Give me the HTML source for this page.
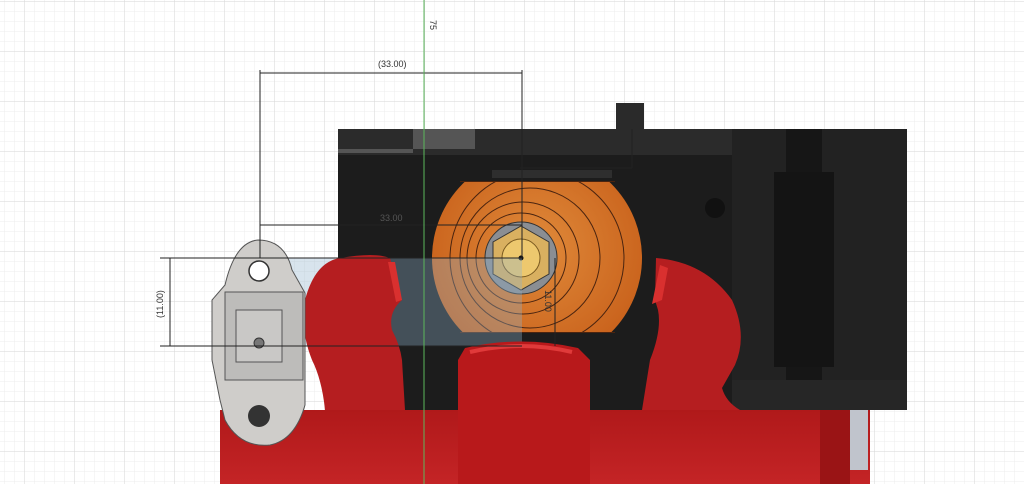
<!DOCTYPE html>
<html><head><meta charset="utf-8"><style>
html,body{margin:0;padding:0;background:#fff;}
svg{display:block}
text{font-family:"Liberation Sans",sans-serif;}
</style></head><body>
<svg width="1024" height="484" viewBox="0 0 1024 484" xmlns="http://www.w3.org/2000/svg">
<defs>
<pattern id="g1" width="10" height="10" patternUnits="userSpaceOnUse" x="5" y="2">
<path d="M10 0V10M0 10H10" fill="none" stroke="#ececec" stroke-width="1"/>
</pattern>
<pattern id="g2" width="50" height="50" patternUnits="userSpaceOnUse" x="25" y="2">
<path d="M50 0V50M0 50H50" fill="none" stroke="#d6d6d6" stroke-width="1"/>
</pattern>
<linearGradient id="red" x1="0" y1="0" x2="0" y2="1">
<stop offset="0" stop-color="#b0191a"/><stop offset="1" stop-color="#c42426"/></linearGradient>
<radialGradient id="org" cx="0.5" cy="0.45" r="0.55">
<stop offset="0" stop-color="#e08a3a"/><stop offset="1" stop-color="#c9621c"/></radialGradient>
</defs>
<rect width="1024" height="484" fill="#fff"/>
<rect width="1024" height="484" fill="url(#g1)"/>
<rect width="1024" height="484" fill="url(#g2)"/>

<!-- black body -->
<rect x="338" y="129" width="569" height="281" fill="#1c1c1c"/>
<rect x="338" y="129" width="569" height="26" fill="#2b2b2b"/>
<rect x="338" y="149" width="75" height="4" fill="#555"/>
<rect x="732" y="150" width="175" height="4" fill="#4a4a4a"/>
<rect x="413" y="129" width="62" height="20" fill="#555"/>
<rect x="616" y="103" width="28" height="27" fill="#2a2a2a"/>
<rect x="732" y="129" width="175" height="281" fill="#222"/>
<rect x="786" y="129" width="36" height="281" fill="#161616"/>
<rect x="774" y="172" width="60" height="195" fill="#141414"/>
<rect x="732" y="380" width="175" height="30" fill="#262626"/>
<circle cx="715" cy="208" r="10" fill="#111"/>
<rect x="492" y="170" width="120" height="8" fill="#2e2e2e"/>

<!-- orange disc -->
<clipPath id="dc"><rect x="420" y="181" width="230" height="152"/></clipPath>
<circle cx="537" cy="258" r="105" fill="url(#org)" clip-path="url(#dc)"/>
<g fill="none" stroke="#4a2410" stroke-width="1" clip-path="url(#dc)">
<circle cx="537" cy="258" r="87"/>
<circle cx="530" cy="258" r="70"/>
<circle cx="523" cy="258" r="56"/>
<circle cx="521" cy="258" r="45"/>
<line x1="460" y1="181.5" x2="615" y2="181.5"/>
<line x1="460" y1="332.5" x2="615" y2="332.5"/>
</g>
<circle cx="521" cy="258" r="36" fill="#8a8e93" stroke="#333"/>
<polygon points="521,226 549,242 549,274 521,290 493,274 493,242" fill="#d9b060" stroke="#333"/>
<circle cx="521" cy="258" r="19" fill="#edc86e" stroke="#7a5a20"/>
<circle cx="521" cy="258" r="2.5" fill="#111"/>

<!-- transparent blue box -->
<rect x="260" y="258" width="262" height="88" fill="#8fb3cc" opacity="0.35"/>

<!-- bottom red band -->
<rect x="220" y="410" width="650" height="74" fill="url(#red)"/>
<rect x="820" y="410" width="30" height="74" fill="#9a1415"/>
<rect x="850" y="410" width="18" height="60" fill="#c0c4cc"/>
<!-- left red bulb -->
<path d="M340 258 Q375 252 390 258 L402 300 Q388 312 392 330 Q400 345 402 360 L405 410 L325 410 Q322 380 312 360 Q300 330 305 300 Q315 262 340 258Z" fill="#b51e20"/>
<!-- middle red -->
<path d="M465 348 Q521 335 578 348 L590 360 L590 484 L458 484 L458 360Z" fill="#b8191b"/>
<path d="M470 352 Q521 340 572 352" fill="none" stroke="#e03a3a" stroke-width="4"/>
<!-- right red -->
<path d="M656 258 Q705 262 732 300 Q748 335 735 365 L722 388 Q726 402 740 410 L642 410 L650 360 Q662 330 658 310 L655 300Z" fill="#b51e20"/>
<path d="M660 265 L668 268 L662 300 L652 304Z" fill="#d9302f"/>
<path d="M388 262 L395 262 L402 300 L396 302Z" fill="#d9302f"/>

<!-- grey bracket -->
<path d="M258 240 Q285 240 292 270 L305 293 L305 405 Q295 440 270 445 Q240 448 225 420 L220 400 L212 360 L212 300 L225 285 Q235 242 258 240Z" fill="#cfcdca" stroke="#555"/>
<path d="M225 292 H303 V380 H225Z" fill="#bdbcba" stroke="#555"/>
<rect x="236" y="310" width="46" height="52" fill="#c9c8c6" stroke="#555"/>
<circle cx="259" cy="271" r="10" fill="#fff" stroke="#333" stroke-width="1.5"/>
<circle cx="259" cy="343" r="5" fill="#777" stroke="#333"/>
<circle cx="259" cy="416" r="11" fill="#333"/>

<!-- dimension lines -->
<g stroke="#222" stroke-width="1" fill="none">
<line x1="260" y1="70" x2="260" y2="258"/>
<line x1="522" y1="70" x2="522" y2="258"/>
<line x1="260" y1="73" x2="522" y2="73"/>
<line x1="260" y1="225" x2="522" y2="225"/>
<line x1="160" y1="258" x2="522" y2="258"/>
<line x1="160" y1="346" x2="522" y2="346"/>
<line x1="170" y1="258" x2="170" y2="346"/>
<line x1="555" y1="258" x2="555" y2="346"/>
<line x1="632" y1="129" x2="632" y2="168"/>
<line x1="520" y1="168" x2="632" y2="168"/>
</g>
<line x1="424" y1="0" x2="424" y2="484" stroke="#5cb85c" stroke-width="1"/>
<text x="378" y="67" font-size="9" fill="#333">(33.00)</text>
<text x="380" y="221" font-size="9" fill="#555">33.00</text>
<text x="0" y="0" font-size="9" fill="#333" transform="translate(430,20) rotate(90)">75</text>
<text x="0" y="0" font-size="9" fill="#333" transform="translate(163,318) rotate(-90)">(11.00)</text>
<text x="0" y="0" font-size="9" fill="#333" transform="translate(545,290) rotate(90)">11.00</text>
</svg>
</body></html>
